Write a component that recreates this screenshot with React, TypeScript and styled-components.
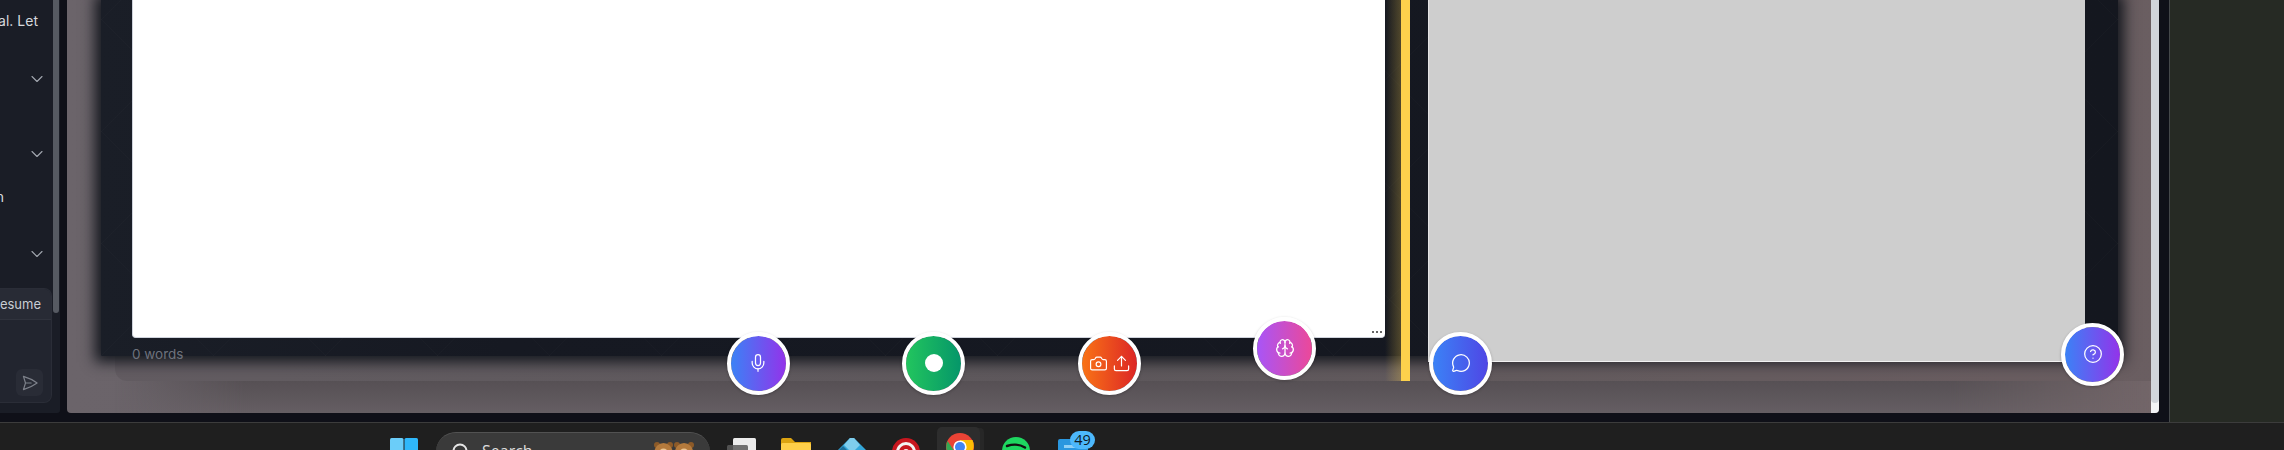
import React from "react";
import styled, { createGlobalStyle } from "styled-components";
import { Mic, Camera, Upload, Brain, MessageCircle, CircleHelp, ChevronDown } from "lucide-react";

const Global = createGlobalStyle`
  html, body { margin: 0; padding: 0; background: #1f1f1f; overflow: hidden; }
  * { box-sizing: border-box; }
`;

const Shell = styled.div`
  width: 2284px;
  height: 450px;
  display: flex;
  flex-direction: column;
  overflow: hidden;
  font-family: Inter, "Noto Sans", sans-serif;
`;
const Desk = styled.div`
  height: 422px;
  display: flex;
  flex: none;
`;
const AppWindow = styled.div`
  width: 2169px;
  height: 422px;
  flex: none;
  display: flex;
  background: #0f1018;
  padding: 0 10px 9px 0;
  gap: 7px;
`;
const SidePanel = styled.div`
  flex: 1;
  background: #262a24;
  border-left: 1px solid #45484a;
`;

/* Sidebar */
const Sidebar = styled.aside`
  width: 60px;
  flex: none;
  display: flex;
  background: #1a1d26;
  border-bottom-right-radius: 3px;
  overflow: hidden;
`;
const SidebarBody = styled.div`
  width: 52px;
  flex: none;
  display: flex;
  flex-direction: column;
  overflow: hidden;
`;
const SidebarTrack = styled.div`
  width: 8px;
  padding-left: 1px;
`;
const SidebarThumb = styled.div`
  width: 5.5px;
  height: 313px;
  background: #565a62;
  border-radius: 0 0 3px 3px;
`;
const TextRow = styled.div<{ $h: number; $right: number }>`
  height: ${(p) => p.$h}px;
  flex: none;
  display: flex;
  align-items: center;
  justify-content: flex-end;
  padding-right: ${(p) => p.$right}px;
  color: #d6d9de;
  font-size: 14px;
  white-space: nowrap;
`;
const AccordionRow = styled.div<{ $h: number; $top: number }>`
  height: ${(p) => p.$h}px;
  flex: none;
  display: flex;
  justify-content: flex-end;
  padding: ${(p) => p.$top}px 5px 0 0;
  color: #a3a8b0;
`;
const ChatBox = styled.div`
  height: 115px;
  flex: none;
  margin-bottom: 9px;
  display: flex;
  flex-direction: column;
  background: #22252f;
  border: 1px solid #2a2d37;
  border-left: 0;
  border-radius: 0 8px 8px 0;
  overflow: hidden;
`;
const ChatHeader = styled.div`
  height: 31px;
  flex: none;
  display: flex;
  align-items: center;
  justify-content: flex-end;
  padding-right: 10px;
  background: #282b35;
  border-bottom: 1px solid #30333d;
  color: #c9cdd3;
  font-size: 13px;
  white-space: nowrap;
`;
const ChatBody = styled.div`
  flex: 1;
  display: flex;
  align-items: flex-end;
  justify-content: flex-end;
  padding: 0 8px 6px 0;
`;
const SendButton = styled.div`
  width: 27px;
  height: 27px;
  display: flex;
  align-items: center;
  justify-content: center;
  background: #292c36;
  border-radius: 6px;
`;

/* Canvas */
const Canvas = styled.main`
  flex: 1;
  position: relative;
  display: flex;
  overflow: hidden;
  border-bottom-left-radius: 4px;
  border-bottom-right-radius: 4px;
  background: linear-gradient(90deg, #6b646a 0%, #665f64 50%, #736669 100%);
`;
const Stage = styled.div`
  flex: 1;
  display: flex;
  flex-direction: column;
  padding-left: 48px;
`;
const Panel = styled.div`
  height: 381px;
  flex: none;
  background: rgba(0, 0, 0, 0.07);
  border-bottom-left-radius: 12px;
`;
const DarkBox = styled.div`
  height: 356px;
  width: 2017px;
  margin-left: -14px;
  padding-left: 31px;
  display: flex;
  background-color: #161922;
  background-image: repeating-linear-gradient(45deg, rgba(255,255,255,.016) 0 1px, transparent 1px 79.2px),
    repeating-linear-gradient(-45deg, rgba(255,255,255,.016) 0 1px, transparent 1px 79.2px),
    linear-gradient(90deg, #1a1e27 0%, #161922 20%, #14171f 100%);
  box-shadow: 0 0 13px 6px #15181f;
`;
const DocColumn = styled.div`
  width: 1253px;
  flex: none;
  display: flex;
  flex-direction: column;
`;
const Doc = styled.div`
  height: 338px;
  flex: none;
  position: relative;
  background: #fff;
  border-bottom: 1px solid #cfd3dc;
  border-left: 1px solid #cfd3dc;
  border-radius: 0 0 4px 4px;
`;
const ResizeDots = styled.div`
  position: absolute;
  right: 3px;
  bottom: 4px;
  display: flex;
  gap: 1.5px;
`;
const ResizeDot = styled.span`
  width: 2.5px;
  height: 2.5px;
  border-radius: 50%;
  background: #333;
`;
const WordCount = styled.div`
  flex: none;
  display: flex;
  align-items: center;
  padding: 8px 0 0 0;
  color: #6e727d;
  font-size: 13.5px;
  line-height: 16px;
  align-self: flex-start;
`;
const Divider = styled.div`
  width: 9px;
  height: 381px;
  flex: none;
  margin-left: 16px;
  position: relative;
  background: #fdd14c;
  &::before {
    content: "";
    position: absolute;
    top: 0;
    bottom: 0;
    right: 9px;
    width: 16px;
    background: linear-gradient(270deg, rgba(253, 209, 76, 0.26), rgba(253, 209, 76, 0));
  }
`;
const GreyPanel = styled.div`
  width: 657px;
  height: 362px;
  flex: none;
  margin-left: 18px;
  background: #cecece;
  border-bottom: 1px solid #f2f2f2;
  border-left: 1px solid #e4e4e4;
`;
const BottomBand = styled.div`
  flex: 1;
  background: linear-gradient(180deg, #565054 0%, #655e63 100%);
  -webkit-mask-image: linear-gradient(90deg, transparent 0, #000 130px, #000 90%, transparent 100%);
  mask-image: linear-gradient(90deg, transparent 0, #000 130px, #000 90%, transparent 100%);
`;
const CanvasTrack = styled.div`
  width: 8px;
  flex: none;
  background: #f3f4f6;
  padding-bottom: 10px;
`;
const CanvasThumb = styled.div`
  height: 100%;
  background: #d1d5db;
  border-radius: 0 0 4px 4px;
`;

const Fab = styled.button<{ $cx: number; $cy: number; $from: string; $to: string }>`
  position: absolute;
  left: ${(p) => p.$cx - 67 - 31.5}px;
  top: ${(p) => p.$cy - 31.5}px;
  width: 63px;
  height: 63px;
  padding: 0;
  display: flex;
  align-items: center;
  justify-content: center;
  gap: 4px;
  color: #fff;
  border: 4px solid #fff;
  border-radius: 50%;
  background: linear-gradient(90deg, ${(p) => p.$from}, ${(p) => p.$to}) padding-box;
  box-shadow: 0 1px 3px rgba(0, 0, 0, 0.25);
`;
const RecordDot = styled.span`
  width: 18px;
  height: 18px;
  border-radius: 50%;
  background: #fff;
`;

/* Taskbar */
const Taskbar = styled.footer`
  height: 28px;
  flex: none;
  display: flex;
  align-items: flex-start;
  padding-left: 390px;
  overflow: hidden;
  background: #1f1f1f;
  border-top: 1px solid #3c3c3c;
`;
const WinLogo = styled.svg`
  width: 28px;
  height: 28px;
  margin-top: 15px;
  flex: none;
`;
const SearchPill = styled.div`
  width: 274px;
  height: 40px;
  margin: 9px 0 0 18px;
  padding-left: 16px;
  flex: none;
  display: flex;
  align-items: flex-start;
  gap: 12px;
  border-radius: 20px;
  background: #3a3a3a;
  border-top: 1px solid #525252;
  color: #dcdcdc;
  font-family: "Open Sans", sans-serif;
  font-size: 16px;
  position: relative;
`;
const SearchText = styled.span`
  margin-top: 8px;
  line-height: 20px;
`;
const SearchIcon = styled.svg`
  margin-top: 10px;
  flex: none;
`;
const Bears = styled.svg`
  position: absolute;
  left: 217px;
  top: 8px;
`;
const TrayIcon = styled.svg<{ $left: number; $top: number }>`
  flex: none;
  margin-left: ${(p) => p.$left}px;
  margin-top: ${(p) => p.$top}px;
`;
const ActiveTile = styled.div`
  width: 43px;
  height: 40px;
  flex: none;
  margin: 4px 0 0 17px;
  padding: 6px 0 0 9px;
  background: #2d2d2d;
  border-radius: 5px;
  box-shadow: 5px 0 0 -1px #272727;
`;
const MailWrap = styled.div`
  position: relative;
  margin: 16px 0 0 28px;
  flex: none;
`;
const Badge = styled.span`
  position: absolute;
  left: 12px;
  top: -8px;
  width: 25px;
  height: 18px;
  border-radius: 9px;
  background: #4db8fb;
  color: #0e1a24;
  font-size: 14.5px;
  line-height: 18px;
  text-align: center;
  font-family: "Open Sans", sans-serif;
`;

export default function App() {
  return (
    <Shell>
      <Global />
      <Desk>
        <AppWindow>
          <Sidebar>
            <SidebarBody>
              <TextRow $h={40} $right={14}>al. Let</TextRow>
              <AccordionRow $h={78} $top={29}><ChevronDown size={20} strokeWidth={1.3} /></AccordionRow>
              <AccordionRow $h={72} $top={26}><ChevronDown size={20} strokeWidth={1.3} /></AccordionRow>
              <TextRow $h={12} $right={48}>on</TextRow>
              <AccordionRow $h={86} $top={42}><ChevronDown size={20} strokeWidth={1.3} /></AccordionRow>
              <ChatBox>
                <ChatHeader>Resume</ChatHeader>
                <ChatBody>
                  <SendButton>
                    <svg width="18" height="18" viewBox="0 0 24 24" fill="none" stroke="#7d818a" strokeWidth="1.6" strokeLinejoin="round" strokeLinecap="round">
                      <path d="M6 12 3.269 3.125A59.769 59.769 0 0 1 21.485 12 59.768 59.768 0 0 1 3.27 20.875L5.999 12Zm0 0h7.5" />
                    </svg>
                  </SendButton>
                </ChatBody>
              </ChatBox>
            </SidebarBody>
            <SidebarTrack><SidebarThumb /></SidebarTrack>
          </Sidebar>
          <Canvas>
            <Stage>
              <Panel>
                <DarkBox>
                  <DocColumn>
                    <Doc>
                      <ResizeDots><ResizeDot /><ResizeDot /><ResizeDot /></ResizeDots>
                    </Doc>
                    <WordCount>0 words</WordCount>
                  </DocColumn>
                  <Divider />
                  <GreyPanel />
                </DarkBox>
              </Panel>
              <BottomBand />
            </Stage>
            <CanvasTrack><CanvasThumb /></CanvasTrack>
            <Fab $cx={758} $cy={363} $from="#3b82f6" $to="#9333ea"><Mic size={20} strokeWidth={1.5} /></Fab>
            <Fab $cx={933.5} $cy={363} $from="#22c55e" $to="#059669"><RecordDot /></Fab>
            <Fab $cx={1109.5} $cy={363} $from="#f97316" $to="#dc2626">
              <Camera size={19} strokeWidth={1.5} /><Upload size={19} strokeWidth={1.5} />
            </Fab>
            <Fab $cx={1284.5} $cy={348} $from="#a855f7" $to="#ec4899"><Brain size={20} strokeWidth={1.5} /></Fab>
            <Fab $cx={1460.5} $cy={363} $from="#3b82f6" $to="#4f46e5"><MessageCircle size={20} strokeWidth={1.5} /></Fab>
            <Fab $cx={2092.5} $cy={354} $from="#3b82f6" $to="#9333ea"><CircleHelp size={20} strokeWidth={1.5} /></Fab>
          </Canvas>
        </AppWindow>
        <SidePanel />
      </Desk>
      <Taskbar>
        <WinLogo viewBox="0 0 28 28">
          <rect x="0" y="0" width="13.5" height="13.5" rx="1.5" fill="#6bcdf9" />
          <rect x="14.5" y="0" width="13.5" height="13.5" rx="1.5" fill="#2fb8fb" />
        </WinLogo>
        <SearchPill>
          <SearchIcon width="18" height="18" viewBox="0 0 18 18" fill="none" stroke="#e6e6e6" strokeWidth="2">
            <circle cx="8" cy="8" r="6.5" />
          </SearchIcon>
          <SearchText>Search</SearchText>
          <Bears width="42" height="12" viewBox="0 0 42 12">
            <circle cx="4" cy="4" r="3" fill="#8c5a28" />
            <circle cx="17" cy="4" r="3" fill="#8c5a28" />
            <circle cx="24" cy="4" r="3" fill="#8c5a28" />
            <circle cx="38" cy="4" r="3" fill="#8c5a28" />
            <circle cx="10.5" cy="11" r="9" fill="#b47a3c" />
            <circle cx="31" cy="11" r="9" fill="#b47a3c" />
            <circle cx="10.5" cy="12" r="4.5" fill="#ecc795" />
            <circle cx="31" cy="12" r="4.5" fill="#ecc795" />
          </Bears>
        </SearchPill>
        <TrayIcon $left={17} $top={15} width="29" height="28" viewBox="0 0 29 28">
          <rect x="6" y="0" width="23" height="28" rx="1.5" fill="#ececec" />
          <rect x="0" y="7" width="21" height="21" rx="1.5" fill="#5a5a5a" fillOpacity="0.85" />
        </TrayIcon>
        <TrayIcon $left={25} $top={15} width="30" height="26" viewBox="0 0 30 26">
          <path d="M0 2a2 2 0 0 1 2-2h8l4 4h16v8H0z" fill="#dca311" />
          <rect x="0" y="5" width="30" height="21" rx="1.5" fill="#ffcf49" />
        </TrayIcon>
        <TrayIcon $left={25} $top={15} width="32" height="26" viewBox="0 0 32 26">
          <path d="M14 0h4L32 14 20 26H12L0 14z" fill="#34a7da" />
          <path d="M14 0h4l6 7-8 8-8-8z" fill="#7fcdec" />
          <path d="M7 8 15 16 9 26 1 14z" fill="#1d6f99" />
        </TrayIcon>
        <TrayIcon $left={24} $top={15} width="28" height="28" viewBox="0 0 28 28">
          <circle cx="14" cy="14" r="14" fill="#c8161f" />
          <circle cx="14" cy="14" r="10" fill="#f3f3f3" />
          <circle cx="14" cy="14" r="7" fill="#c8161f" />
          <circle cx="14" cy="14" r="3" fill="#f3f3f3" />
        </TrayIcon>
        <ActiveTile>
          <svg width="28" height="28" viewBox="0 0 28 28">
            <circle cx="14" cy="14" r="14" fill="#ea4335" />
            <path d="M14 7h12.5a14 14 0 0 1-1 13L14 14z" fill="#fbbc04" />
            <path d="M1.5 8 9 19l-3 6A14 14 0 0 1 1.5 8z" fill="#34a853" />
            <circle cx="14" cy="14" r="6.6" fill="#fff" />
            <circle cx="14" cy="14" r="5" fill="#4285f4" />
          </svg>
        </ActiveTile>
        <TrayIcon $left={22} $top={14} width="28" height="28" viewBox="0 0 28 28">
          <circle cx="14" cy="14" r="14" fill="#1ed760" />
          <path d="M5 9c6-2 13-1.600 18 1.500" fill="none" stroke="#111" strokeWidth="2.4" strokeLinecap="round" />
        </TrayIcon>
        <MailWrap>
          <svg width="30" height="26" viewBox="0 0 30 26" style={{ display: "block" }}>
            <rect x="0" y="0" width="30" height="26" rx="2" fill="#2a97df" />
            <rect x="6" y="6" width="12" height="3" fill="#8fd0f5" />
          </svg>
          <Badge>49</Badge>
        </MailWrap>
      </Taskbar>
    </Shell>
  );
}
